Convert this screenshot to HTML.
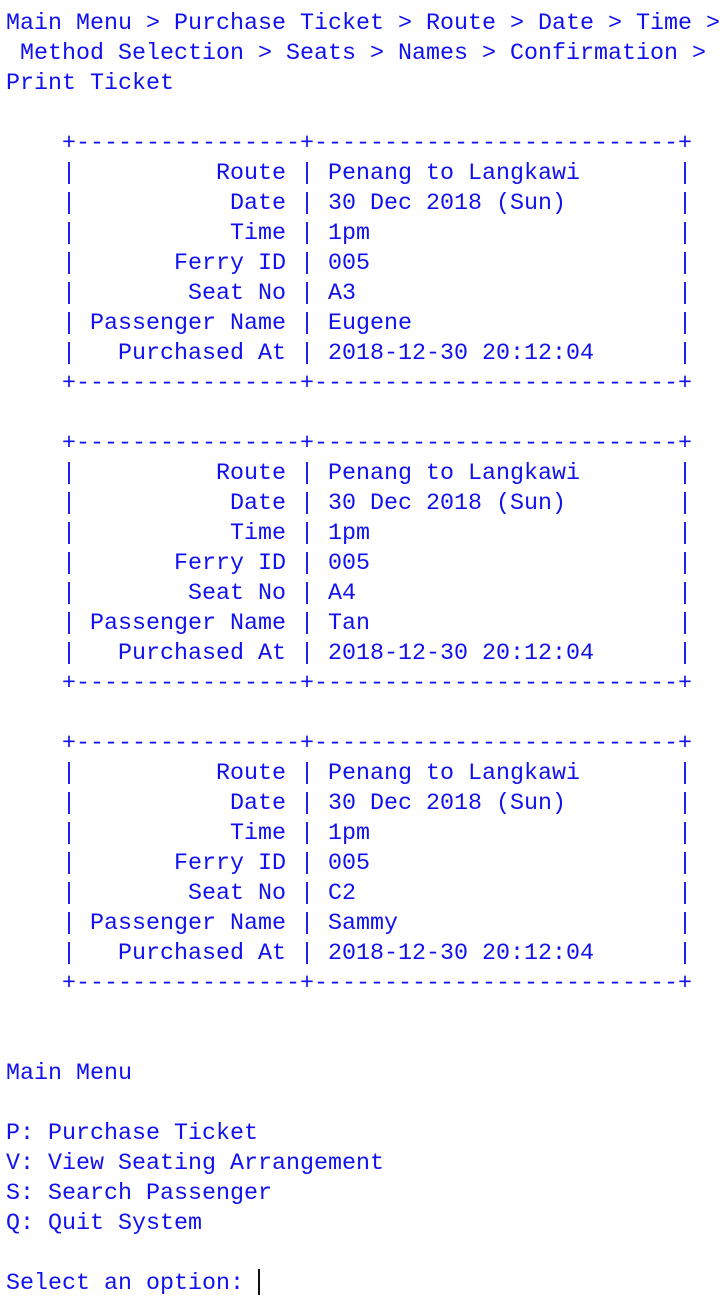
<!DOCTYPE html>
<html><head><meta charset="utf-8"><style>
html,body{margin:0;padding:0;background:#fff;width:726px;height:1294px;overflow:hidden}
pre{margin:0;position:absolute;left:6px;top:9px;font-family:"Liberation Mono",monospace;font-size:23.33px;line-height:30px;color:#1010f0;white-space:pre}
.cur{display:inline-block;width:2px;height:26px;background:#111;vertical-align:-6px}
</style></head><body><pre>Main Menu &gt; Purchase Ticket &gt; Route &gt; Date &gt; Time &gt;
 Method Selection &gt; Seats &gt; Names &gt; Confirmation &gt;
Print Ticket

    +----------------+--------------------------+
    |          Route | Penang to Langkawi       |
    |           Date | 30 Dec 2018 (Sun)        |
    |           Time | 1pm                      |
    |       Ferry ID | 005                      |
    |        Seat No | A3                       |
    | Passenger Name | Eugene                   |
    |   Purchased At | 2018-12-30 20:12:04      |
    +----------------+--------------------------+

    +----------------+--------------------------+
    |          Route | Penang to Langkawi       |
    |           Date | 30 Dec 2018 (Sun)        |
    |           Time | 1pm                      |
    |       Ferry ID | 005                      |
    |        Seat No | A4                       |
    | Passenger Name | Tan                      |
    |   Purchased At | 2018-12-30 20:12:04      |
    +----------------+--------------------------+

    +----------------+--------------------------+
    |          Route | Penang to Langkawi       |
    |           Date | 30 Dec 2018 (Sun)        |
    |           Time | 1pm                      |
    |       Ferry ID | 005                      |
    |        Seat No | C2                       |
    | Passenger Name | Sammy                    |
    |   Purchased At | 2018-12-30 20:12:04      |
    +----------------+--------------------------+


Main Menu

P: Purchase Ticket
V: View Seating Arrangement
S: Search Passenger
Q: Quit System

Select an option: <span class="cur"></span></pre></body></html>
